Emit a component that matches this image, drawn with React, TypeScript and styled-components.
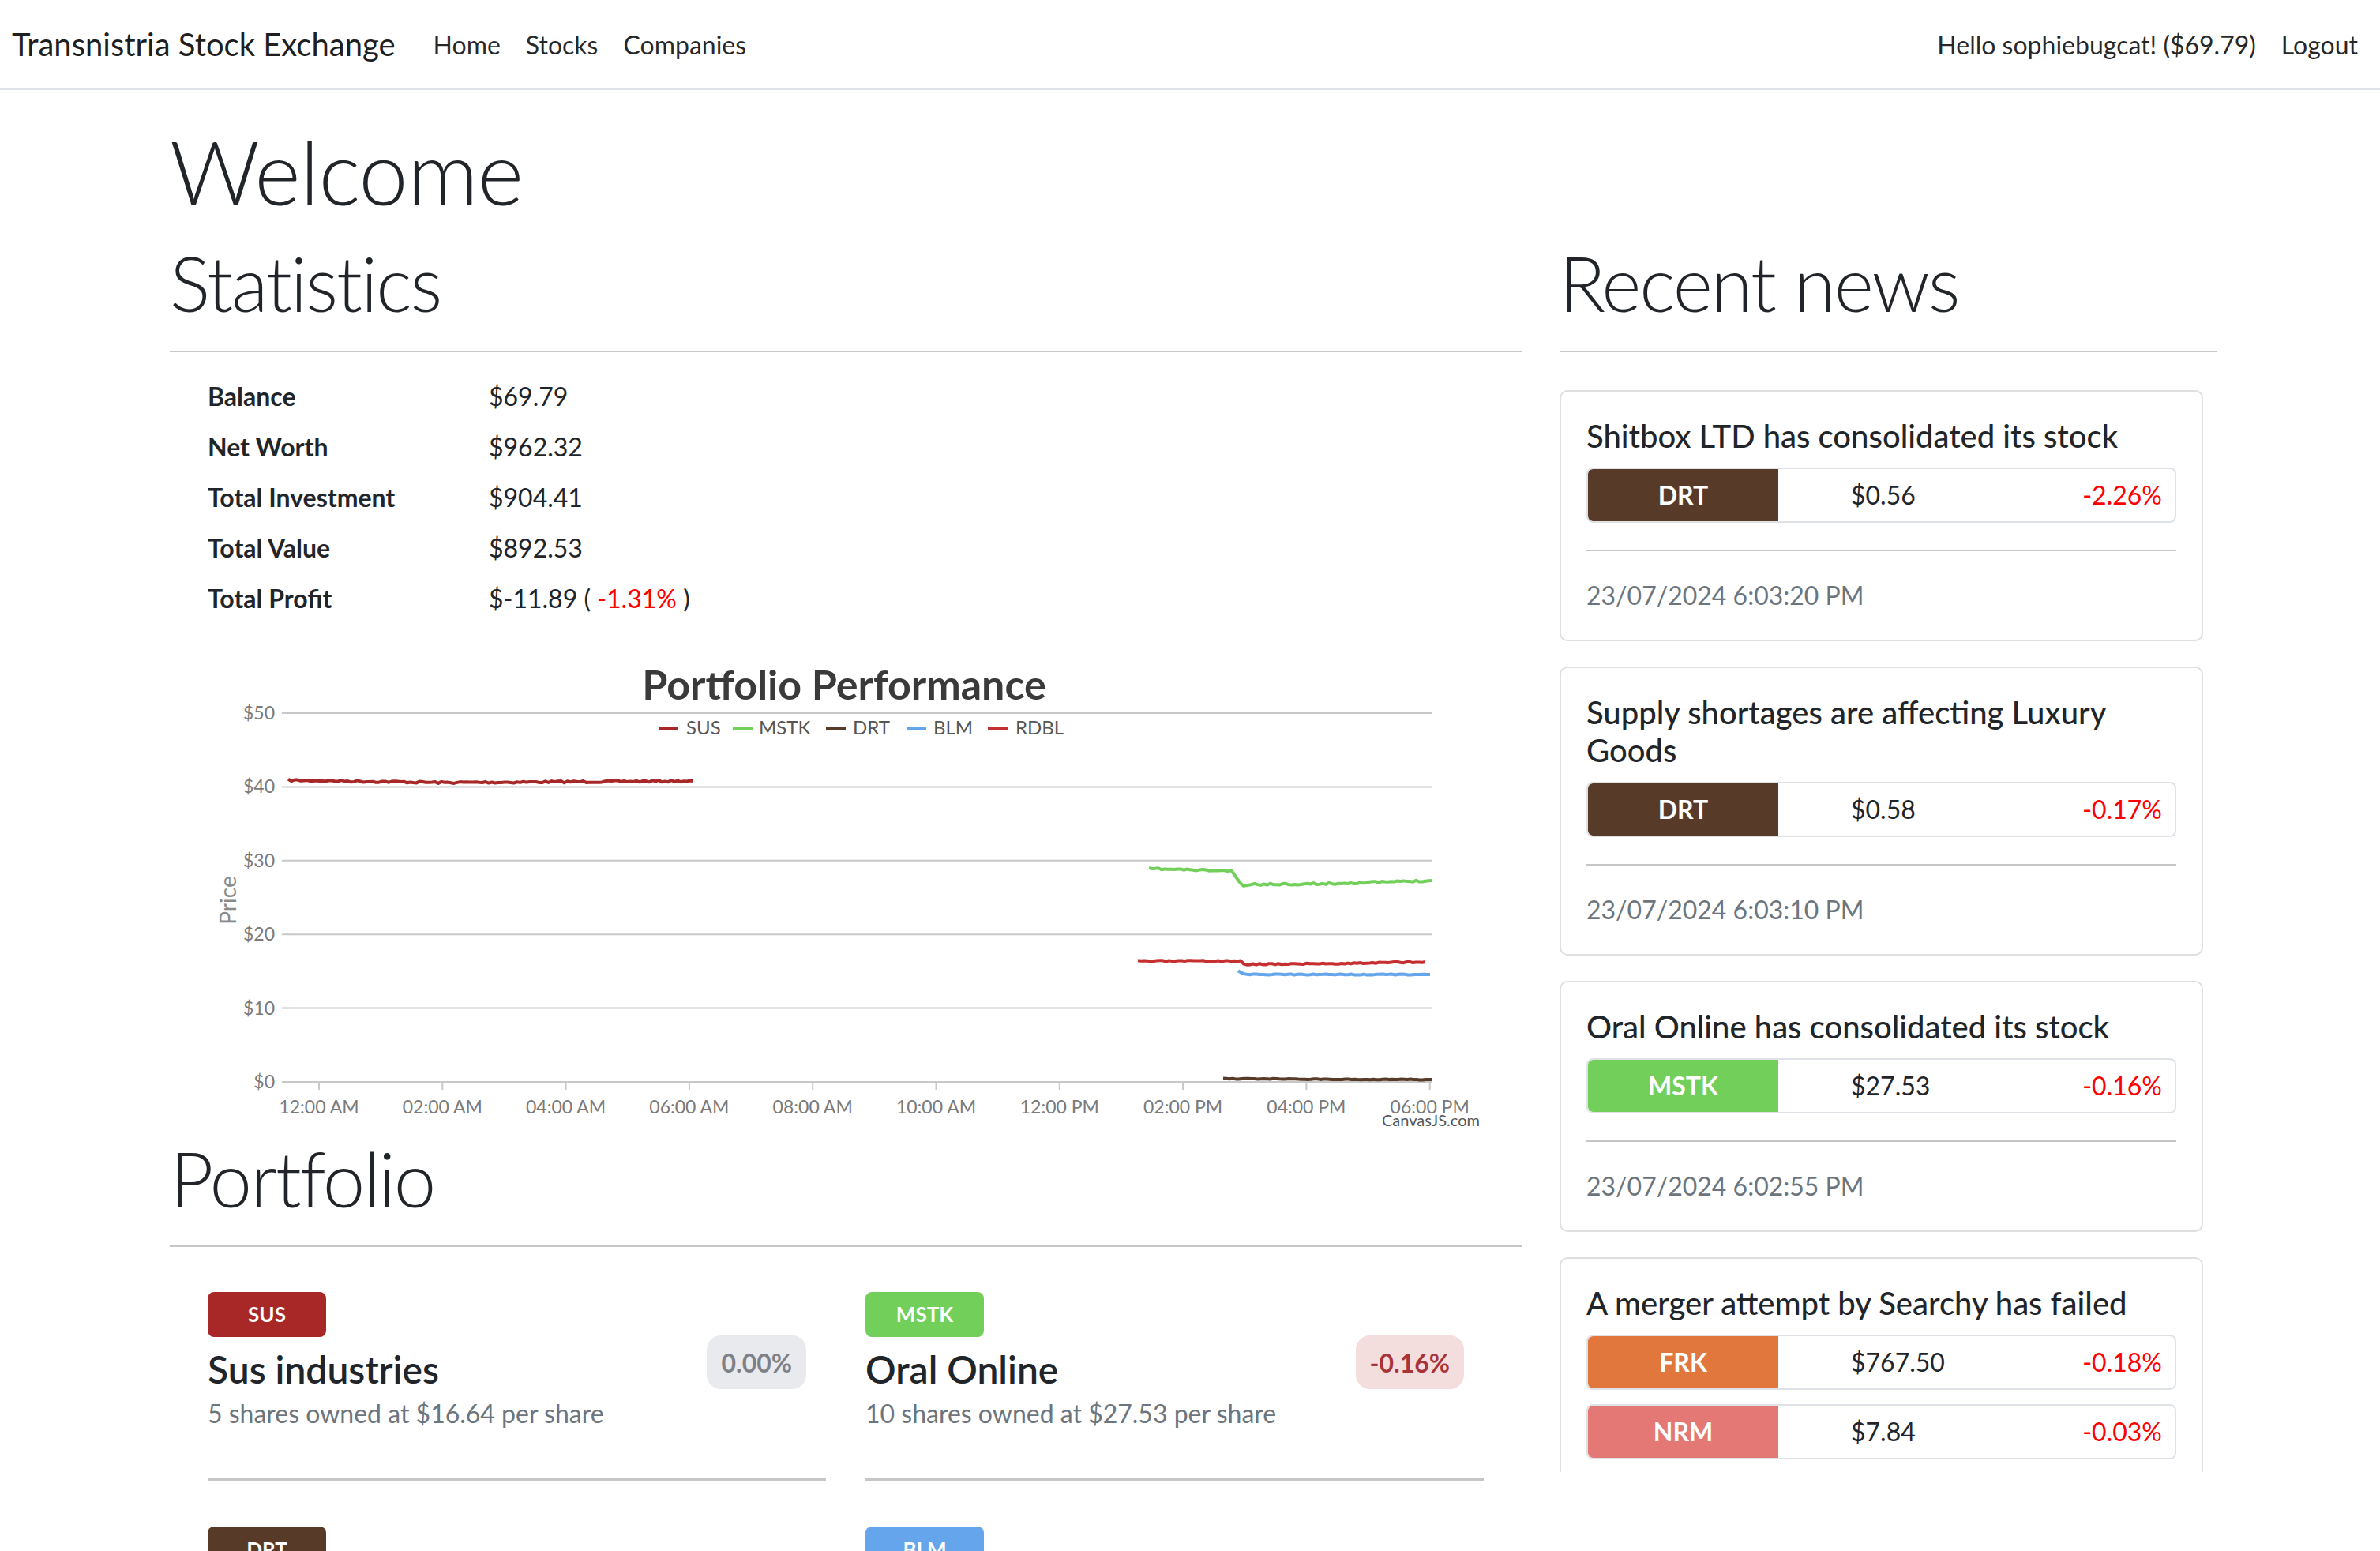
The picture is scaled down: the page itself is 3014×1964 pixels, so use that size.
import styled, { createGlobalStyle } from "styled-components";

const GlobalStyle = createGlobalStyle`
  * { box-sizing: border-box; }
  body {
    margin: 0;
    background: #fff;
    color: #212529;
    font-family: Lato, "Open Sans", "Liberation Sans", sans-serif;
  }
`;

const Navbar = styled.nav`
  height: 114px;
  display: flex;
  align-items: center;
  padding: 0 12px 0 15px;
  border-bottom: 2px solid #dee2e6;
`;

const Brand = styled.a`
  font-size: 40px;
  margin-right: 32px;
  color: rgba(0, 0, 0, 0.9);
  text-decoration: none;
`;

const NavGroup = styled.div<{ $grow?: boolean }>`
  display: flex;
  align-items: center;
  flex: ${(p) => (p.$grow ? 1 : "none")};
`;

const NavLink = styled.a`
  font-size: 32px;
  padding: 0 16px;
  color: rgba(0, 0, 0, 0.85);
  text-decoration: none;
`;

const Main = styled.main`
  width: 2592px;
  margin: 0 0 0 215px;
  padding-top: 36px;
`;

const Display = styled.h1`
  font-size: 112px;
  font-weight: 300;
  line-height: 1.2;
  letter-spacing: -1px;
  margin: 0 0 16px;
`;

const SectionTitle = styled.h2`
  font-size: 96px;
  font-weight: 300;
  line-height: 1.2;
  letter-spacing: -2px;
  margin: 0;
`;

const Rule = styled.hr`
  border: none;
  border-top: 2px solid #c6c6c6;
  margin: 28px 0 0;
`;

const Row = styled.div`
  display: grid;
  grid-template-columns: 1712px 832px;
  gap: 48px;
  align-items: start;
`;

const StatsTable = styled.table`
  border-collapse: collapse;
  margin: 24px 0 0 40px;
  font-size: 32px;

  td {
    padding: 8px;
    line-height: 48px;
  }
  td:first-child {
    width: 356px;
    font-weight: 700;
  }
`;

const Red = styled.span`
  color: #ff0000;
`;

const ChartSvg = styled.svg`
  display: block;
  margin: 10px 0 0 48px;
  font-family: Lato, "Open Sans", sans-serif;
`;

const PortfolioGrid = styled.div`
  display: grid;
  grid-template-columns: 1fr 1fr;
  column-gap: 50px;
  padding: 57px 48px 0;
`;

const Holding = styled.div`
  display: flex;
  flex-direction: column;
`;

const HoldingBody = styled.div`
  display: flex;
  align-items: center;
  justify-content: space-between;
  padding-right: 25px;
`;

const Ticker = styled.span<{ $color: string }>`
  display: inline-flex;
  align-items: center;
  justify-content: center;
  width: 150px;
  height: 57px;
  border-radius: 8px;
  background: ${(p) => p.$color};
  color: #fff;
  font-weight: 700;
  font-size: 26px;
`;

const HoldingName = styled.h4`
  font-size: 48px;
  font-weight: 600;
  line-height: 1.2;
  margin: 12px 0 4px;
`;

const Muted = styled.div`
  font-size: 32px;
  line-height: 48px;
  color: #6c757d;
`;

const Pill = styled.span<{ $neg: boolean }>`
  padding: 0 18px;
  height: 68px;
  display: inline-flex;
  align-items: center;
  border-radius: 18px;
  font-size: 32px;
  font-weight: 700;
  background: ${(p) => (p.$neg ? "#f3dedd" : "#e9eaed")};
  color: ${(p) => (p.$neg ? "#a8343a" : "#7d8087")};
`;

const HoldingRule = styled.hr`
  border: none;
  border-top: 3px solid #c6c6c6;
  margin: 58px 0 58px;
`;

const NewsList = styled.div`
  height: 1418px;
  overflow: hidden;
  padding-top: 48px;
`;

const Card = styled.div`
  margin: 0 17px 32px 0;
  border: 2px solid #dfdfdf;
  border-radius: 10px;
  padding: 32px;
`;

const CardTitle = styled.h5`
  font-size: 40px;
  font-weight: 500;
  line-height: 1.2;
  margin: 0 0 16px;
`;

const StockRow = styled.div`
  display: grid;
  grid-template-columns: 241px 1fr auto;
  align-items: center;
  height: 70px;
  border: 2px solid #dee2e6;
  border-radius: 8px;
  overflow: hidden;
  font-size: 32px;
  & + & {
    margin-top: 18px;
  }
`;

const StockTicker = styled.div<{ $color: string }>`
  height: 100%;
  display: flex;
  align-items: center;
  justify-content: center;
  background: ${(p) => p.$color};
  color: #fff;
  font-weight: 700;
  border-radius: 6px 0 0 6px;
`;

const StockPrice = styled.div`
  padding-left: 92px;
`;

const StockChange = styled.div`
  padding-right: 16px;
  color: #ff0000;
`;

const CardRule = styled.hr`
  border: none;
  border-top: 2px solid #c6c6c6;
  margin: 34px 0 32px;
`;

const Date = styled.div`
  font-size: 32px;
  line-height: 48px;
  color: #6c757d;
`;

const colors: Record<string, string> = {
  SUS: "#a82828",
  MSTK: "#71cf5a",
  DRT: "#583a29",
  BLM: "#65a5eb",
  FRK: "#e2773e",
  NRM: "#e37874",
  RDBL: "#c62f2f",
};

type Stock = { ticker: string; price: string; change: string };
type News = { title: string; stocks: Stock[]; date?: string };

const news: News[] = [
  {
    title: "Shitbox LTD has consolidated its stock",
    stocks: [{ ticker: "DRT", price: "$0.56", change: "-2.26%" }],
    date: "23/07/2024 6:03:20 PM",
  },
  {
    title: "Supply shortages are affecting Luxury Goods",
    stocks: [{ ticker: "DRT", price: "$0.58", change: "-0.17%" }],
    date: "23/07/2024 6:03:10 PM",
  },
  {
    title: "Oral Online has consolidated its stock",
    stocks: [{ ticker: "MSTK", price: "$27.53", change: "-0.16%" }],
    date: "23/07/2024 6:02:55 PM",
  },
  {
    title: "A merger attempt by Searchy has failed",
    stocks: [
      { ticker: "FRK", price: "$767.50", change: "-0.18%" },
      { ticker: "NRM", price: "$7.84", change: "-0.03%" },
    ],
    date: "23/07/2024 6:02:40 PM",
  },
];

const holdings = [
  { ticker: "SUS", name: "Sus industries", detail: "5 shares owned at $16.64 per share", change: "0.00%" },
  { ticker: "MSTK", name: "Oral Online", detail: "10 shares owned at $27.53 per share", change: "-0.16%" },
  { ticker: "DRT", name: "Shitbox LTD", detail: "100 shares owned at $0.60 per share", change: "-2.26%" },
  { ticker: "BLM", name: "Bloom", detail: "20 shares owned at $15.20 per share", change: "-0.05%" },
];

// simple seeded noise so the chart looks the same every render
function makeRand(seed: number) {
  let s = seed;
  return () => {
    s = (s * 16807) % 2147483647;
    return (s - 1) / 2147483646;
  };
}

function series(points: [number, number][], seed: number, jitter = 1.6) {
  const rand = makeRand(seed);
  const out: string[] = [];
  for (let i = 0; i < points.length - 1; i++) {
    const [x0, y0] = points[i];
    const [x1, y1] = points[i + 1];
    const steps = Math.max(1, Math.round((x1 - x0) / 4));
    for (let k = 0; k < steps; k++) {
      const t = k / steps;
      const x = x0 + (x1 - x0) * t;
      const y = y0 + (y1 - y0) * t + (rand() - 0.5) * jitter;
      out.push(`${x.toFixed(1)},${y.toFixed(1)}`);
    }
  }
  const last = points[points.length - 1];
  out.push(`${last[0]},${last[1]}`);
  return out.join(" ");
}

const gridY = [103, 196.4, 289.8, 383.2, 476.6, 570];
const yLabels = ["$50", "$40", "$30", "$20", "$10", "$0"];
const xLabels = [
  "12:00 AM", "02:00 AM", "04:00 AM", "06:00 AM", "08:00 AM",
  "10:00 AM", "12:00 PM", "02:00 PM", "04:00 PM", "06:00 PM",
];

const legend = [
  { name: "SUS", line: 571, text: 606 },
  { name: "MSTK", line: 665, text: 698 },
  { name: "DRT", line: 783, text: 817 },
  { name: "BLM", line: 885, text: 919 },
  { name: "RDBL", line: 988, text: 1023 },
];

const PortfolioChart = () => (
  <ChartSvg width={1614} height={634} viewBox="0 0 1614 634">
    <text x={806} y={86} textAnchor="middle" fontSize={52} fontWeight={700} fill="#3a3a3a">
      Portfolio Performance
    </text>
    {gridY.map((y, i) => (
      <g key={y}>
        <line x1={94} x2={1550} y1={y} y2={y} stroke="#c8c8c8" strokeWidth={2} />
        <text x={85} y={y + 8} textAnchor="end" fontSize={23} fill="#7a7a7a">
          {yLabels[i]}
        </text>
      </g>
    ))}
    {xLabels.map((l, i) => {
      const x = 141 + i * 156.3;
      return (
        <g key={l}>
          <line x1={x} x2={x} y1={570} y2={580} stroke="#c8c8c8" strokeWidth={2} />
          <text x={x} y={610} textAnchor="middle" fontSize={23} fill="#7a7a7a">
            {l}
          </text>
        </g>
      );
    })}
    <text
      x={36}
      y={340}
      textAnchor="middle"
      fontSize={28}
      fill="#8a8a8a"
      transform="rotate(-90 36 340)"
    >
      Price
    </text>
    {legend.map((l) => (
      <g key={l.name}>
        <line x1={l.line} x2={l.line + 25} y1={122} y2={122} stroke={colors[l.name]} strokeWidth={4} />
        <text x={l.text} y={130} fontSize={24} fill="#555">
          {l.name}
        </text>
      </g>
    ))}
    <g fill="none" strokeWidth={4} strokeLinejoin="round">
      <polyline stroke={colors.SUS} points={series([[102, 188], [300, 191], [615, 189]], 7, 2.4)} />
      <polyline
        stroke={colors.MSTK}
        points={series(
          [[1192, 300], [1296, 303], [1312, 323], [1318, 320], [1420, 319], [1550, 315]],
          11,
          2.2,
        )}
      />
      <polyline
        stroke={colors.RDBL}
        points={series([[1178, 417], [1308, 417], [1312, 421], [1440, 420], [1542, 418]], 3, 1.6)}
      />
      <polyline
        stroke={colors.BLM}
        points={series([[1305, 430], [1316, 434], [1548, 434]], 5, 1.4)}
      />
      <polyline
        stroke={colors.DRT}
        points={series([[1286, 566], [1500, 567], [1550, 567]], 9, 1)}
      />
    </g>
    <text x={1611} y={626} textAnchor="end" fontSize={20} fill="#555">
      CanvasJS.com
    </text>
  </ChartSvg>
);

export default function App() {
  return (
    <>
      <GlobalStyle />
      <Navbar>
        <Brand href="#">Transnistria Stock Exchange</Brand>
        <NavGroup $grow>
          <NavLink href="#">Home</NavLink>
          <NavLink href="#">Stocks</NavLink>
          <NavLink href="#">Companies</NavLink>
        </NavGroup>
        <NavGroup>
          <NavLink>Hello sophiebugcat! ($69.79)</NavLink>
          <NavLink href="#">Logout</NavLink>
        </NavGroup>
      </Navbar>
      <Main>
        <Display>Welcome</Display>
        <Row>
          <div>
            <SectionTitle>Statistics</SectionTitle>
            <Rule />
            <StatsTable>
              <tbody>
                <tr><td>Balance</td><td>$69.79</td></tr>
                <tr><td>Net Worth</td><td>$962.32</td></tr>
                <tr><td>Total Investment</td><td>$904.41</td></tr>
                <tr><td>Total Value</td><td>$892.53</td></tr>
                <tr>
                  <td>Total Profit</td>
                  <td>
                    $-11.89 ( <Red>-1.31%</Red> )
                  </td>
                </tr>
              </tbody>
            </StatsTable>
            <PortfolioChart />
            <SectionTitle>Portfolio</SectionTitle>
            <Rule />
            <PortfolioGrid>
              {holdings.map((h) => (
                <Holding key={h.ticker}>
                  <HoldingBody>
                    <div>
                      <Ticker $color={colors[h.ticker]}>{h.ticker}</Ticker>
                      <HoldingName>{h.name}</HoldingName>
                      <Muted>{h.detail}</Muted>
                    </div>
                    <Pill $neg={h.change.startsWith("-")}>{h.change}</Pill>
                  </HoldingBody>
                  <HoldingRule />
                </Holding>
              ))}
            </PortfolioGrid>
          </div>
          <div>
            <SectionTitle>Recent news</SectionTitle>
            <Rule />
            <NewsList>
              {news.map((n) => (
                <Card key={n.title}>
                  <CardTitle>{n.title}</CardTitle>
                  {n.stocks.map((s) => (
                    <StockRow key={s.ticker}>
                      <StockTicker $color={colors[s.ticker]}>{s.ticker}</StockTicker>
                      <StockPrice>{s.price}</StockPrice>
                      <StockChange>{s.change}</StockChange>
                    </StockRow>
                  ))}
                  <CardRule />
                  <Date>{n.date}</Date>
                </Card>
              ))}
            </NewsList>
          </div>
        </Row>
      </Main>
    </>
  );
}
